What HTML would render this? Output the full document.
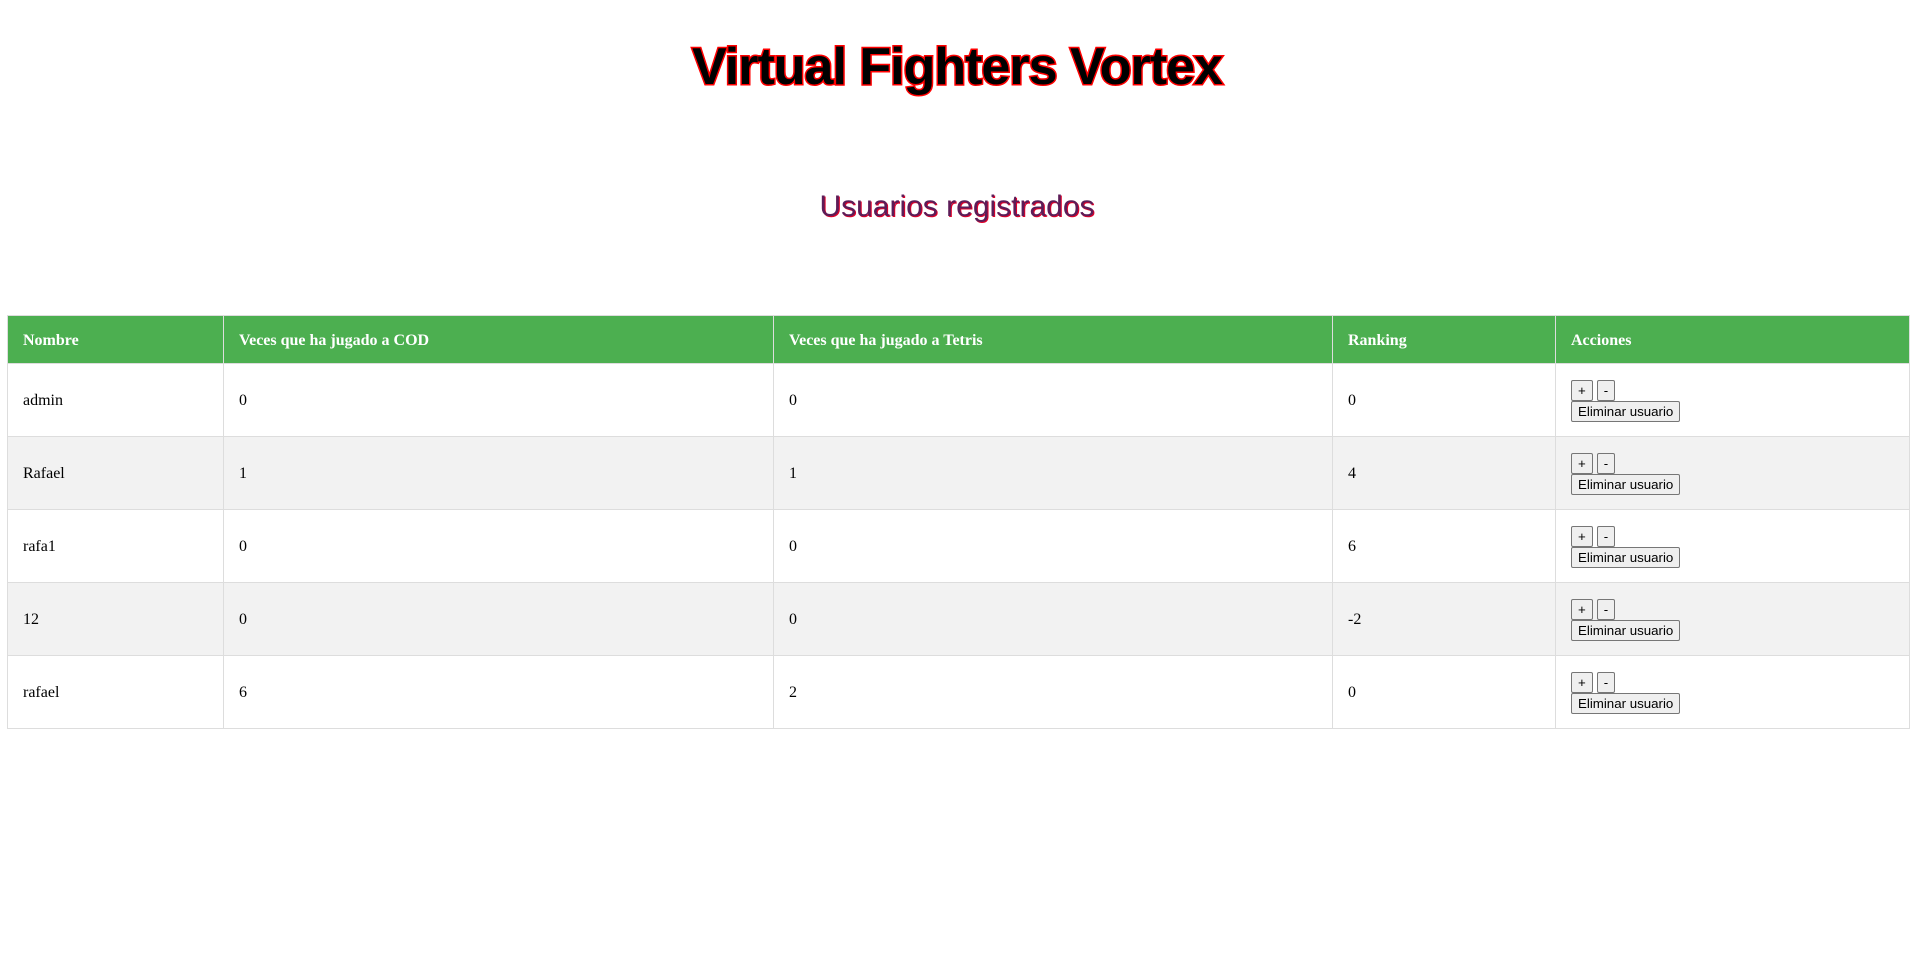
<!DOCTYPE html>
<html><head><meta charset="utf-8"><style>
body{margin:0;background:#fff;font-family:"Liberation Serif",serif;}
h1{position:absolute;left:0;width:1914px;top:37px;margin:0;text-align:center;font-family:"Liberation Sans",sans-serif;font-weight:900;font-size:52px;line-height:60px;color:#000;-webkit-text-stroke:3px #f00;paint-order:stroke fill;}
h1 span{display:inline-block;letter-spacing:-1px;}
h2{position:absolute;left:0;width:1914px;top:190px;margin:0;text-align:center;font-family:"Liberation Sans",sans-serif;font-weight:normal;font-size:30px;line-height:34px;color:#5c1d58;text-shadow:1px 1px 0 #e0002a;}
table{position:absolute;left:7px;top:315px;width:1903px;border-collapse:collapse;font-size:16px;}
th,td{border:1px solid #ddd;padding:2px 0 0 15px;text-align:left;}
th{background:#4caf50;color:#fff;height:45px;font-weight:bold;}
td{height:70px;color:#000;}
tr:nth-child(odd) td{background:#f2f2f2;}
button{font-family:"Liberation Sans",sans-serif;font-size:13.3px;padding:1px 6px;height:21px;border:1px solid #767676;border-radius:2px;background:#efefef;margin:0;line-height:16px;vertical-align:top;}
</style></head><body>
<h1><span>Virtual Fighters Vortex</span></h1>
<h2>Usuarios registrados</h2>
<table>
<colgroup><col style="width:216px"><col style="width:550px"><col style="width:559px"><col style="width:223px"><col></colgroup>
<tr><th>Nombre</th><th>Veces que ha jugado a COD</th><th>Veces que ha jugado a Tetris</th><th>Ranking</th><th>Acciones</th></tr>
<tr><td>admin</td><td>0</td><td>0</td><td>0</td><td><div><button style="margin-right:4px">+</button><button>-</button></div><div><button>Eliminar usuario</button></div></td></tr>
<tr><td>Rafael</td><td>1</td><td>1</td><td>4</td><td><div><button style="margin-right:4px">+</button><button>-</button></div><div><button>Eliminar usuario</button></div></td></tr>
<tr><td>rafa1</td><td>0</td><td>0</td><td>6</td><td><div><button style="margin-right:4px">+</button><button>-</button></div><div><button>Eliminar usuario</button></div></td></tr>
<tr><td>12</td><td>0</td><td>0</td><td>-2</td><td><div><button style="margin-right:4px">+</button><button>-</button></div><div><button>Eliminar usuario</button></div></td></tr>
<tr><td>rafael</td><td>6</td><td>2</td><td>0</td><td><div><button style="margin-right:4px">+</button><button>-</button></div><div><button>Eliminar usuario</button></div></td></tr>
</table>
</body></html>
